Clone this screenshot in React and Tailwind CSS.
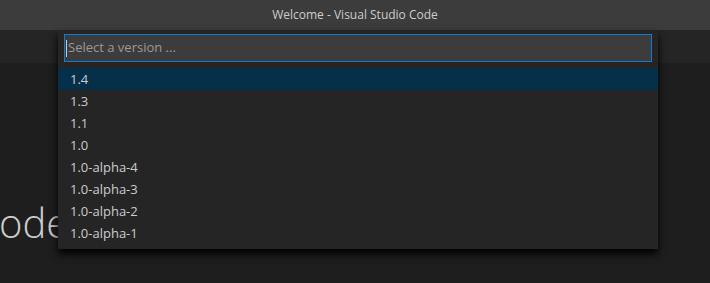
import React from "react";

const versions = ["1.4", "1.3", "1.1", "1.0", "1.0-alpha-4", "1.0-alpha-3", "1.0-alpha-2", "1.0-alpha-1"];

export default function App() {
  return (
    <div
      className="relative w-[710px] h-[283px] overflow-hidden bg-[#1e1e1e]"
      style={{ fontFamily: '"Segoe UI", "Open Sans", "Noto Sans", sans-serif' }}
    >
      <div className="h-[30px] bg-[#3c3c3c] flex items-center justify-center text-[12px] text-[#cccccc]">
        Welcome - Visual Studio Code
      </div>
      <div className="h-[33px] bg-[#252526]" />
      <div className="pt-[140px]">
        <div className="text-[40px] leading-none font-light text-[#cccccc] -ml-[1px]">ode</div>
      </div>

      <div className="absolute left-[58px] top-[30px] w-[600px] h-[219px] bg-[#252526] shadow-[0_5px_8px_#000000] flex flex-col">
        <div className="px-[6px] pt-[4px]">
          <div className="h-[28px] bg-[#3c3c3c] border border-[#0e7ad0] flex items-center pl-[1px]">
            <div className="w-px h-[17px] bg-[#cccccc]" />
            <span className="text-[13px] text-[#9a9a9a] ml-[1px]">Select a version ...</span>
          </div>
        </div>
        <div className="mt-[6px] flex flex-col">
          {versions.map((v, i) => (
            <div
              key={v}
              className={
                "h-[22px] flex items-center pl-[12px] pt-[1px] text-[13px] text-[#cccccc] " +
                (i === 0 ? "bg-[#062f4a]" : "")
              }
            >
              {v}
            </div>
          ))}
        </div>
      </div>
    </div>
  );
}
